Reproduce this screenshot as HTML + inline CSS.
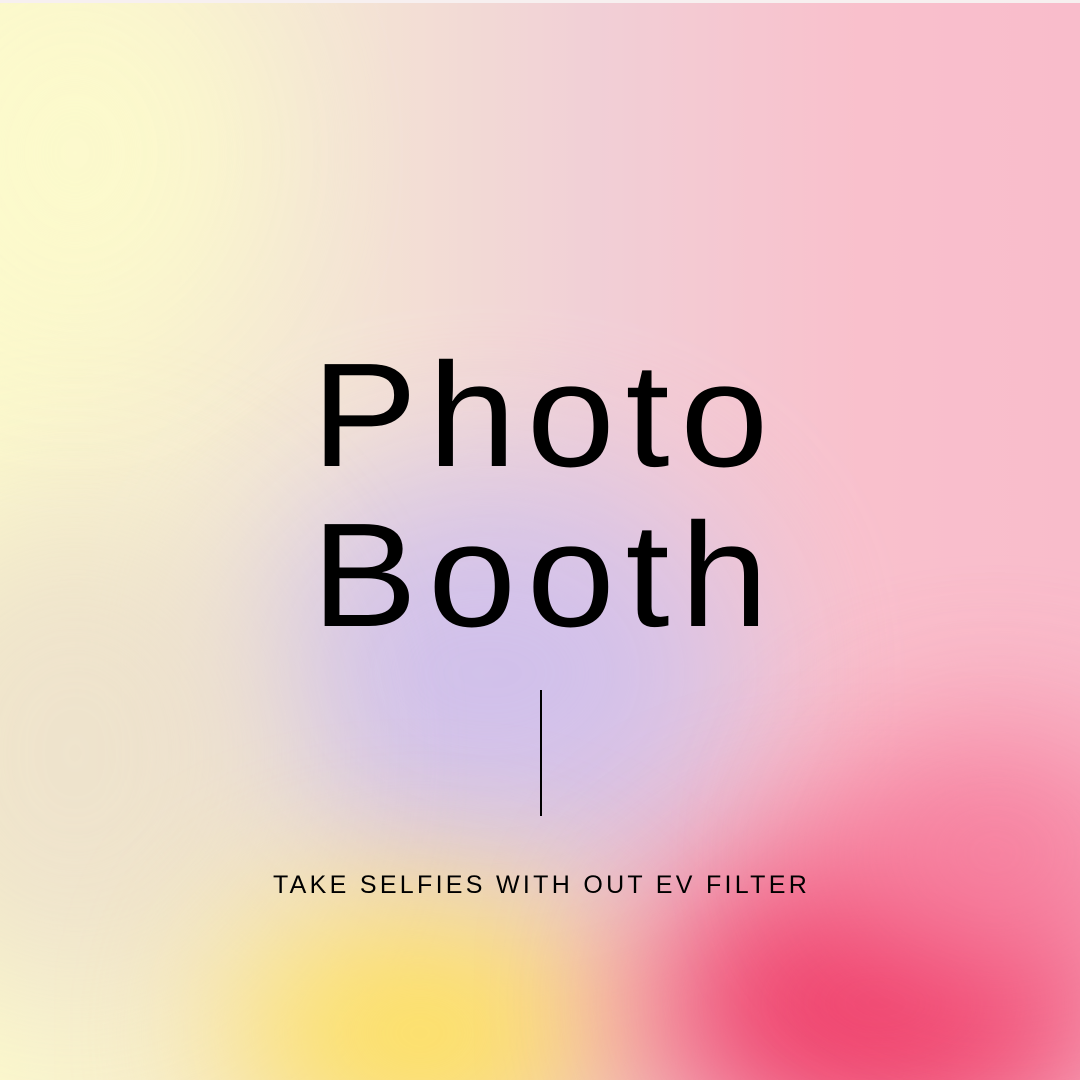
<!DOCTYPE html>
<html><head><meta charset="utf-8"><style>
html,body{margin:0;padding:0}
body{width:1080px;height:1080px;position:relative;overflow:hidden;background:#f7f0f0}
.bg{position:absolute;left:0;top:3px;width:1080px;height:1077px;overflow:hidden;
background:linear-gradient(90deg,#fbf8cc 0%,#f4e6d4 30%,#f1cfd6 55%,#f9c0cc 80%,#f9bccb 100%)}
.b{position:absolute;border-radius:50%;filter:blur(80px)}
.t{position:absolute;left:0;width:1080px;text-align:center;font-family:"Liberation Sans",sans-serif;color:#000}
</style></head><body>
<div class="bg">
<div class="b" style="left:240px;top:470px;width:500px;height:400px;background:#d0c0ec;opacity:.95"></div>
<div class="b" style="left:-150px;top:500px;width:450px;height:500px;background:#ecdfcc;opacity:.8"></div>
<div class="b" style="left:230px;top:900px;width:380px;height:260px;background:#fde060"></div>
<div class="b" style="left:650px;top:850px;width:460px;height:300px;background:#ee3a66"></div>
<div class="b" style="left:820px;top:720px;width:350px;height:260px;background:#f77e9e;opacity:.85"></div>
<div class="b" style="left:-100px;top:-50px;width:350px;height:400px;background:#fcfacc;opacity:.9"></div>
</div>
<div class="t" style="top:336px;height:320px;font-size:148px;line-height:160px;letter-spacing:10px;padding-left:10px;box-sizing:border-box;transform:scaleX(1.07)">Photo<br>Booth</div>
<div style="position:absolute;left:540px;top:690px;width:1.5px;height:126px;background:#000"></div>
<div class="t" style="top:871px;font-size:25px;letter-spacing:3.3px;padding-left:3px;box-sizing:border-box">TAKE SELFIES WITH OUT EV FILTER</div>
</body></html>
